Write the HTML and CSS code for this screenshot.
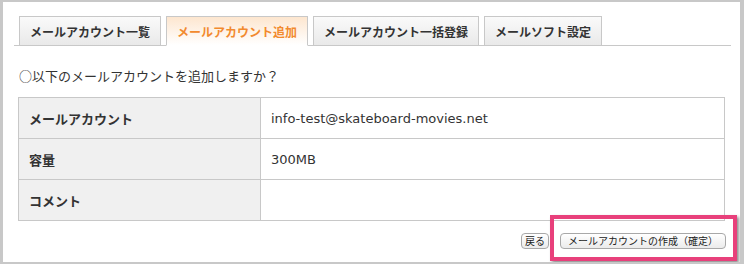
FILE: index.html
```html
<!DOCTYPE html>
<html lang="ja">
<head>
  <meta charset="UTF-8">
  <title>メールアカウント追加</title>
  <link rel="stylesheet" href="styles.css">
</head>
<body>
  <div class="frame">
    <ul class="tabs">
      <li class="tab">メールアカウント一覧</li>
      <li class="tab active">メールアカウント追加</li>
      <li class="tab">メールアカウント一括登録</li>
      <li class="tab">メールソフト設定</li>
    </ul>
    <div class="content">
      <p class="question">○以下のメールアカウントを追加しますか？</p>
      <table class="confirm">
        <tr>
          <th>メールアカウント</th>
          <td>info-test@skateboard-movies.net</td>
        </tr>
        <tr>
          <th>容量</th>
          <td>300MB</td>
        </tr>
        <tr>
          <th>コメント</th>
          <td></td>
        </tr>
      </table>
      <div class="btn-row">
        <button class="btn btn-back">戻る</button>
        <button class="btn btn-submit">メールアカウントの作成（確定）</button>
      </div>
    </div>
    <!-- 注目枠 -->
    <div class="highlight"></div>
  </div>
</body>
</html>
```

FILE: styles.css
```css
body {
  margin: 0;
  background: #fff;
  color: #333;
  font-family: "Noto Sans CJK JP", sans-serif;
}
.frame {
  position: relative;
  box-sizing: border-box;
  width: 744px;
  height: 264px;
  border: solid #c8c8c8;
  border-width: 2px 4px 2px 3px;
  padding: 14px 9px 0 11px;
  overflow: hidden;
}
.tabs {
  display: flex;
  gap: 5px;
  list-style: none;
  margin: 0;
  padding: 0 0 0 5px;
  border-bottom: 1px solid #c8c8c8;
}
.tab {
  height: 28px;
  line-height: 29px;
  padding: 0 10px;
  margin-bottom: -1px;
  border: 1px solid #c8c8c8;
  background: linear-gradient(#fafafa, #e9e9e9);
  font-size: 12px;
  font-weight: bold;
  color: #333;
}
.tab.active {
  border-bottom-color: #fff;
  background: linear-gradient(#fde6cf, #fff);
  color: #f28a2e;
}
.content {
  padding: 0 6px 0 4px;
}
.question {
  margin: 20px 0 11px;
  padding-left: 1px;
  font-size: 13px;
  line-height: 20px;
}
.confirm {
  width: 100%;
  border-collapse: collapse;
}
.confirm th,
.confirm td {
  height: 40px;
  padding: 0 10px;
  border: 1px solid #c8c8c8;
  font-size: 13px;
  text-align: left;
}
.confirm th {
  width: 221px;
  background: #f0f0f0;
  font-weight: bold;
}
.confirm td {
  font-family: "DejaVu Sans", "Noto Sans CJK JP", sans-serif;
  color: #333;
}
.btn-row {
  display: flex;
  justify-content: flex-end;
  gap: 11px;
  margin: 12px -1px 0 0;
}
.btn {
  height: 16px;
  line-height: 14px;
  border: 1px solid #a8a8a8;
  border-radius: 4px;
  background: linear-gradient(#fff, #ebebeb);
  font-family: "Noto Sans CJK JP", sans-serif;
  font-size: 10px;
  color: #222;
}
.btn-back { padding: 0 3px; }
.btn-submit { padding: 0 7px; }
.highlight {
  position: absolute;
  left: 547px;
  top: 213px;
  width: 187px;
  height: 46px;
  box-sizing: border-box;
  border: 4px solid #e8407b;
  box-shadow: 2px 2px 3px rgba(0,0,0,0.45);
}
```
